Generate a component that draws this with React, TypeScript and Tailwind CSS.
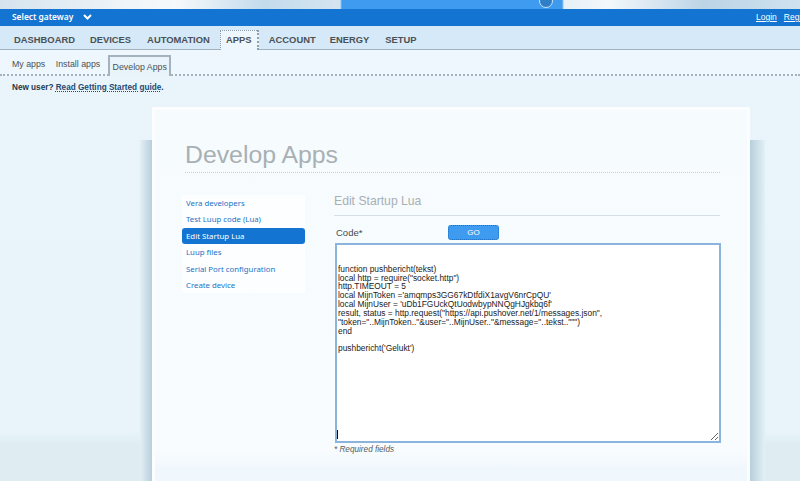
const sans = "font-['Liberation_Sans',Arial,sans-serif]";
const lucida = "font-['Noto_Sans',sans-serif]";

const sideLinks = ["Vera developers", "Test Luup code (Lua)", "Edit Startup Lua", "Luup files", "Serial Port configuration", "Create device"];

const code = `

function pushbericht(tekst)
local http = require("socket.http")
http.TIMEOUT = 5
local MijnToken ='amqmps3GG67kDtfdiX1avgV6nrCpQU'
local MijnUser = 'uDb1FGUckQtUodwbypNNQgHJgkbq6f'
result, status = http.request("https://api.pushover.net/1/messages.json",
"token="..MijnToken.."&user="..MijnUser.."&message="..tekst..""")
end

pushbericht('Gelukt')
`;

export default function App() {
  return (
    <div className={`w-[800px] h-[481px] overflow-hidden flex flex-col bg-[linear-gradient(#e9f5fb_0,#e8f4fa_432px,#dfedf3_444px)] ${sans}`}>
      {/* banner photo strip */}
      <div className="h-[9px] shrink-0 relative bg-[linear-gradient(90deg,#d5e3ee_0,#eef4f8_15%,#f6f9fb_22%,#c3dbec_33%,#d5e5f0_340px,#3f9bf0_342px,#3f9bf0_562px,#e6f0f6_564px,#f3f8fb_76%,#bcd4e6_88%,#cfe2ef_100%)]">
        <div className="absolute left-[539px] top-[-6px] w-[14px] h-[14px] rounded-full bg-[#2f7fc8] border border-[#c9e2f6]" />
      </div>

      <div className="h-[17px] shrink-0 bg-[#1375d1] flex items-center justify-between text-white">
        <div className={`pl-[12px] flex items-center gap-[10px] text-[8.4px] font-semibold ${lucida}`}>
          Select gateway
          <svg width="9" height="6" viewBox="0 0 9 6" fill="none" stroke="white" strokeWidth="2">
            <path d="M1 1l3.5 3.5L8 1" />
          </svg>
        </div>
        <div className="flex gap-[7px] text-[8.5px] underline whitespace-nowrap w-[44px]">
          <span>Login</span>
          <span>Register</span>
        </div>
      </div>

      <div className="h-[24px] shrink-0 bg-[#d6e9f8] border-b border-[#a4b2bd] flex items-end pl-[14px] text-[9.4px] font-bold text-[#4a5155]">
        <span className="pb-[2px] leading-[14px]">DASHBOARD</span>
        <span className="pb-[2px] leading-[14px] ml-[15px]">DEVICES</span>
        <span className="pb-[2px] leading-[14px] ml-[16px]">AUTOMATION</span>
        <span className="h-[20px] w-[39px] ml-[10px] -mb-px text-center bg-[#eff7fe] border border-b-0 border-dotted border-[#8f9fab] border-r-2 pt-[2px] leading-[14px]">APPS</span>
        <span className="pb-[2px] leading-[14px] ml-[10px]">ACCOUNT</span>
        <span className="pb-[2px] leading-[14px] ml-[14px]">ENERGY</span>
        <span className="pb-[2px] leading-[14px] ml-[16px]">SETUP</span>
      </div>

      <div className="h-[26px] shrink-0 bg-[#eff7fe] border-b-2 border-dotted border-[#a4b2bd] flex items-end pl-[12px] text-[8.8px] text-[#4a5155]">
        <span className="pb-[4px] leading-[12px]">My apps</span>
        <span className="pb-[4px] leading-[12px] ml-[10.5px]">Install apps</span>
        <span className="h-[21px] w-[63px] ml-[8px] -mb-[2px] text-center pt-[4px] leading-[12px] bg-[#e8f4fa] border-2 border-b-0 border-[#a4b2bd]">Develop Apps</span>
      </div>

      <div className="pl-[12px] pt-[6px] text-[8.2px] font-bold leading-[12px] text-[#24374a]">
        New user? <span className="underline decoration-dotted text-[#1d4a75]">Read Getting Started guide</span>.
      </div>

      {/* card with soft side shadows */}
      <div className="relative mt-[13px] ml-[152px] w-[598px] flex-1 min-h-0">
        <div className="absolute left-[-12px] top-[33px] bottom-0 w-[12px] bg-[linear-gradient(90deg,#e3f0f6,#b7cfdc)]" />
        <div className="absolute right-[-15px] top-[33px] bottom-0 w-[15px] bg-[linear-gradient(90deg,#b7cfdc,#e3f0f6)]" />
        <div className="relative h-full border-t-[3px] border-x-[3px] border-[#fbfdfe] bg-[linear-gradient(#f6fbfe_0,#f8fcfe_340px,#f0f7fd_360px)] pl-[30px] pr-[27px]">
          <h1 className="mt-[30px] text-[24.8px] leading-[30px] text-[#a8b0b3] border-b border-dotted border-[#c5d0d6] pb-[2px]">Develop Apps</h1>
          <div className="flex mt-[22px]">
            <div className="w-[123px] -ml-[3px] shrink-0 text-[7.8px] text-[#1a72c6] self-start">
              {sideLinks.map((l, i) =>
                i === 2 ? (
                  <div key={l} className={`h-[16.4px] leading-[16.4px] pl-[4px] rounded-[3px] bg-[#1375d1] text-white ${lucida}`}>{l}</div>
                ) : (
                  <div key={l} className={`h-[16.4px] leading-[16.4px] pl-[4px] bg-white/70 ${lucida}`}>{l}</div>
                ),
              )}
            </div>
            <div className="ml-[29px] flex-1 min-w-0">
              <h2 className="text-[12.2px] leading-[14px] text-[#a8b0b3] border-b border-[#d5dfe5] pb-[7px] mt-[-1px]">Edit Startup Lua</h2>
              <div className="flex items-center mt-[9px] pl-[2px] h-[17px] text-[9.5px] text-[#444b50]">
                <span className="w-[112px]">Code*</span>
                <button className="w-[51px] h-[15px] mb-[2px] rounded-[3px] bg-[#3f9bf0] border border-dotted border-[#1a6fc0] text-[8px] leading-[13px] text-white">GO</button>
              </div>
              <div className="relative mt-[1px] ml-[1px] w-[386px]">
                <textarea
                  readOnly
                  defaultValue={code}
                  className="block w-full h-[200px] bg-white border-2 border-[#8ab4dc] rounded-none py-[2px] px-px text-[8.4px] leading-[8.85px] text-[#222] resize-y overflow-hidden outline-none"
                />
                <div className="absolute left-[2px] bottom-[4px] w-px h-[9px] bg-black" />
              </div>
              <p className="mt-[1px] text-[8.2px] italic leading-[12px] text-[#555c60]">* Required fields</p>
            </div>
          </div>
        </div>
      </div>
    </div>
  );
}
